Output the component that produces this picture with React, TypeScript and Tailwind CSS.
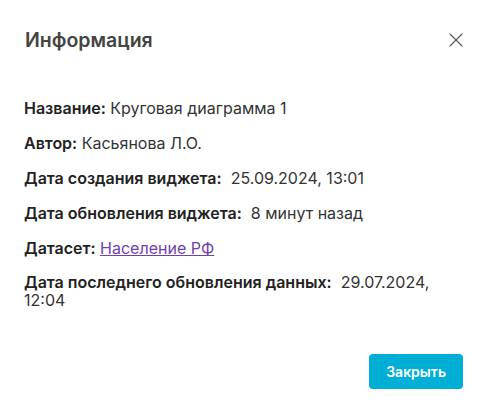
import { X } from "lucide-react";

const rows = [
  { label: "Название:", value: "Круговая диаграмма 1", gap: false },
  { label: "Автор:", value: "Касьянова Л.О.", gap: false },
  { label: "Дата создания виджета:", value: "25.09.2024, 13:01", gap: true },
  { label: "Дата обновления виджета:", value: "8 минут назад", gap: true },
];

export default function App() {
  return (
    <div className="w-[488px] h-[416px] bg-white font-['Inter',sans-serif] text-[#333]">
      <div className="flex items-center justify-between pl-[25px] pr-[20px] pt-[26px]">
        <h2 className="text-[19.5px] leading-[28px] font-semibold text-[#444]">Информация</h2>
        <button className="text-[#555]">
          <X size={24} strokeWidth={1.1} />
        </button>
      </div>
      <div className="mt-[44px] px-[24px] flex flex-col gap-[15px] text-[16px] leading-[20px]">
        {rows.map((r) => (
          <p key={r.label}>
            <strong className="font-semibold text-[#222]">{r.label}</strong> {r.gap && "\u00a0"}
            {r.value}
          </p>
        ))}
        <p>
          <strong className="font-semibold text-[#222]">Датасет:</strong>{" "}
          <a href="#" className="text-[#7040b0] underline">
            Население РФ
          </a>
        </p>
        <p className="leading-[18px]">
          <strong className="font-semibold text-[#222]">Дата последнего обновления данных:</strong>{" "}
          {"\u00a0"}29.07.2024, 12:04
        </p>
      </div>
      <div className="flex justify-end px-[25px] mt-[45px]">
        <button className="h-[35px] px-[17px] rounded bg-[#00aed6] text-white text-[14px] font-semibold">
          Закрыть
        </button>
      </div>
    </div>
  );
}
